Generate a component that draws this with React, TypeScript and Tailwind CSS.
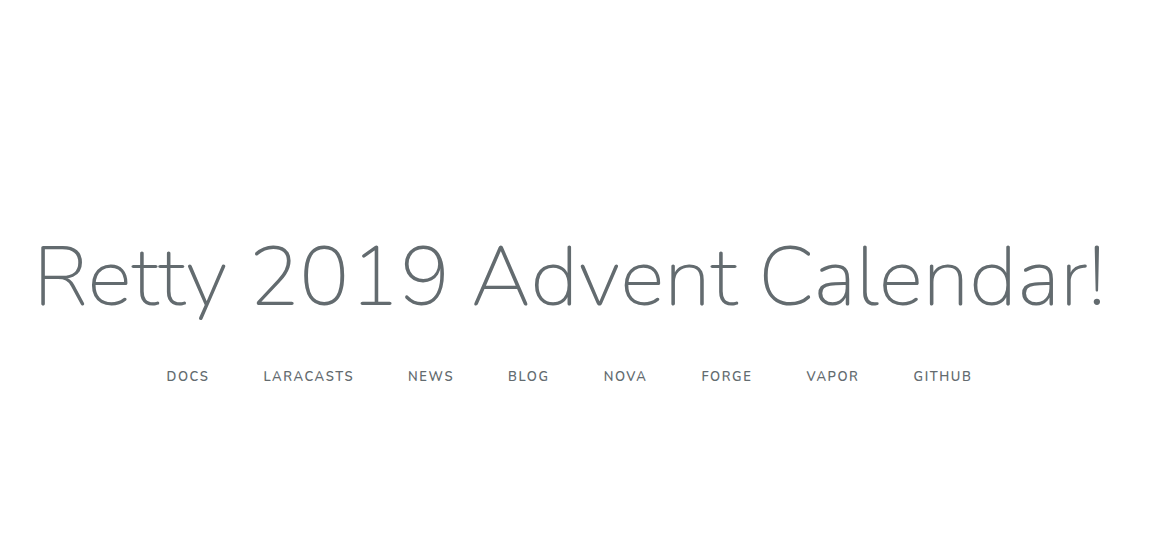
const links = ["Docs", "Laracasts", "News", "Blog", "Nova", "Forge", "Vapor", "GitHub"];

export default function App() {
  return (
    <div
      className="flex h-[544px] w-full items-center justify-center bg-white pr-5 pt-[80px] text-[#636b6f]"
      style={{ fontFamily: "'Nunito', 'Inter', 'Noto Sans', sans-serif" }}
    >
      <div className="text-center">
        <div className="mb-[48px] text-[84px] font-extralight leading-none">Retty 2019 Advent Calendar!</div>
        <div className="flex justify-center gap-1">
          {links.map((l) => (
            <a
              key={l}
              href="#"
              className="px-[25px] text-[13px] font-semibold uppercase tracking-[0.1rem] text-[#636b6f] no-underline"
            >
              {l}
            </a>
          ))}
        </div>
      </div>
    </div>
  );
}
